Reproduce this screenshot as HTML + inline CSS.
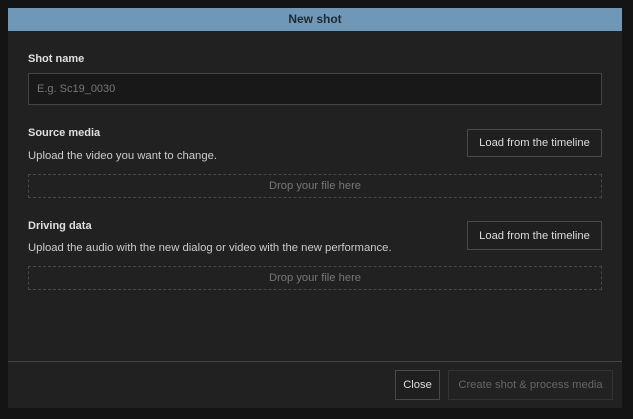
<!DOCTYPE html><html><head><style>
*{margin:0;padding:0;box-sizing:border-box}
body{width:633px;height:419px;background:#141414;font-family:"Liberation Sans",sans-serif;position:relative;overflow:hidden;color:#ddd}
.d{position:absolute;left:8px;top:8px;width:614px;height:400px;background:#212121}
.h{height:23px;background:#6f98b8;color:#1e2a33;font-weight:bold;font-size:12px;text-align:center;line-height:23px}
.a{position:absolute;font-size:11.3px}
.lb{font-weight:bold;color:#e0e0e0;font-size:11px}
.in{position:absolute;left:20px;top:65px;width:574px;height:32px;background:#181818;border:1px solid #444;color:#777;font-size:11px;line-height:31px;padding-left:8px}
.btn{position:absolute;border:1px solid #4a4a4a;background:#1f1f1f;color:#ddd;font-size:11.2px;text-align:center}
.dz{position:absolute;left:20px;width:574px;height:24px;border:1px dashed #484848;color:#777;font-size:11.2px;text-align:center;line-height:23px}
.sep{position:absolute;left:0;top:353px;width:614px;height:1px;background:#444}
</style></head><body><div class="d">
<div class="h">New shot</div>
<div class="a lb" style="left:20px;top:45px">Shot name</div>
<div class="in">E.g. Sc19_0030</div>
<div class="a lb" style="left:20px;top:119px">Source media</div>
<div class="a" style="left:20px;top:142px;color:#ccc">Upload the video you want to change.</div>
<div class="btn" style="left:459px;top:121px;width:135px;height:28px;line-height:27px">Load from the timeline</div>
<div class="dz" style="top:166px">Drop your file here</div>
<div class="a lb" style="left:20px;top:212px">Driving data</div>
<div class="a" style="left:20px;top:234px;color:#ccc">Upload the audio with the new dialog or video with the new performance.</div>
<div class="btn" style="left:459px;top:213px;width:135px;height:29px;line-height:28px">Load from the timeline</div>
<div class="dz" style="top:258px">Drop your file here</div>
<div class="sep"></div>
<div class="btn" style="left:387px;top:362px;width:45px;height:30px;line-height:29px">Close</div>
<div class="btn" style="left:440px;top:362px;width:165px;height:30px;line-height:29px;color:#666;border-color:#333;background:#222">Create shot &amp; process media</div>
</div></body></html>
